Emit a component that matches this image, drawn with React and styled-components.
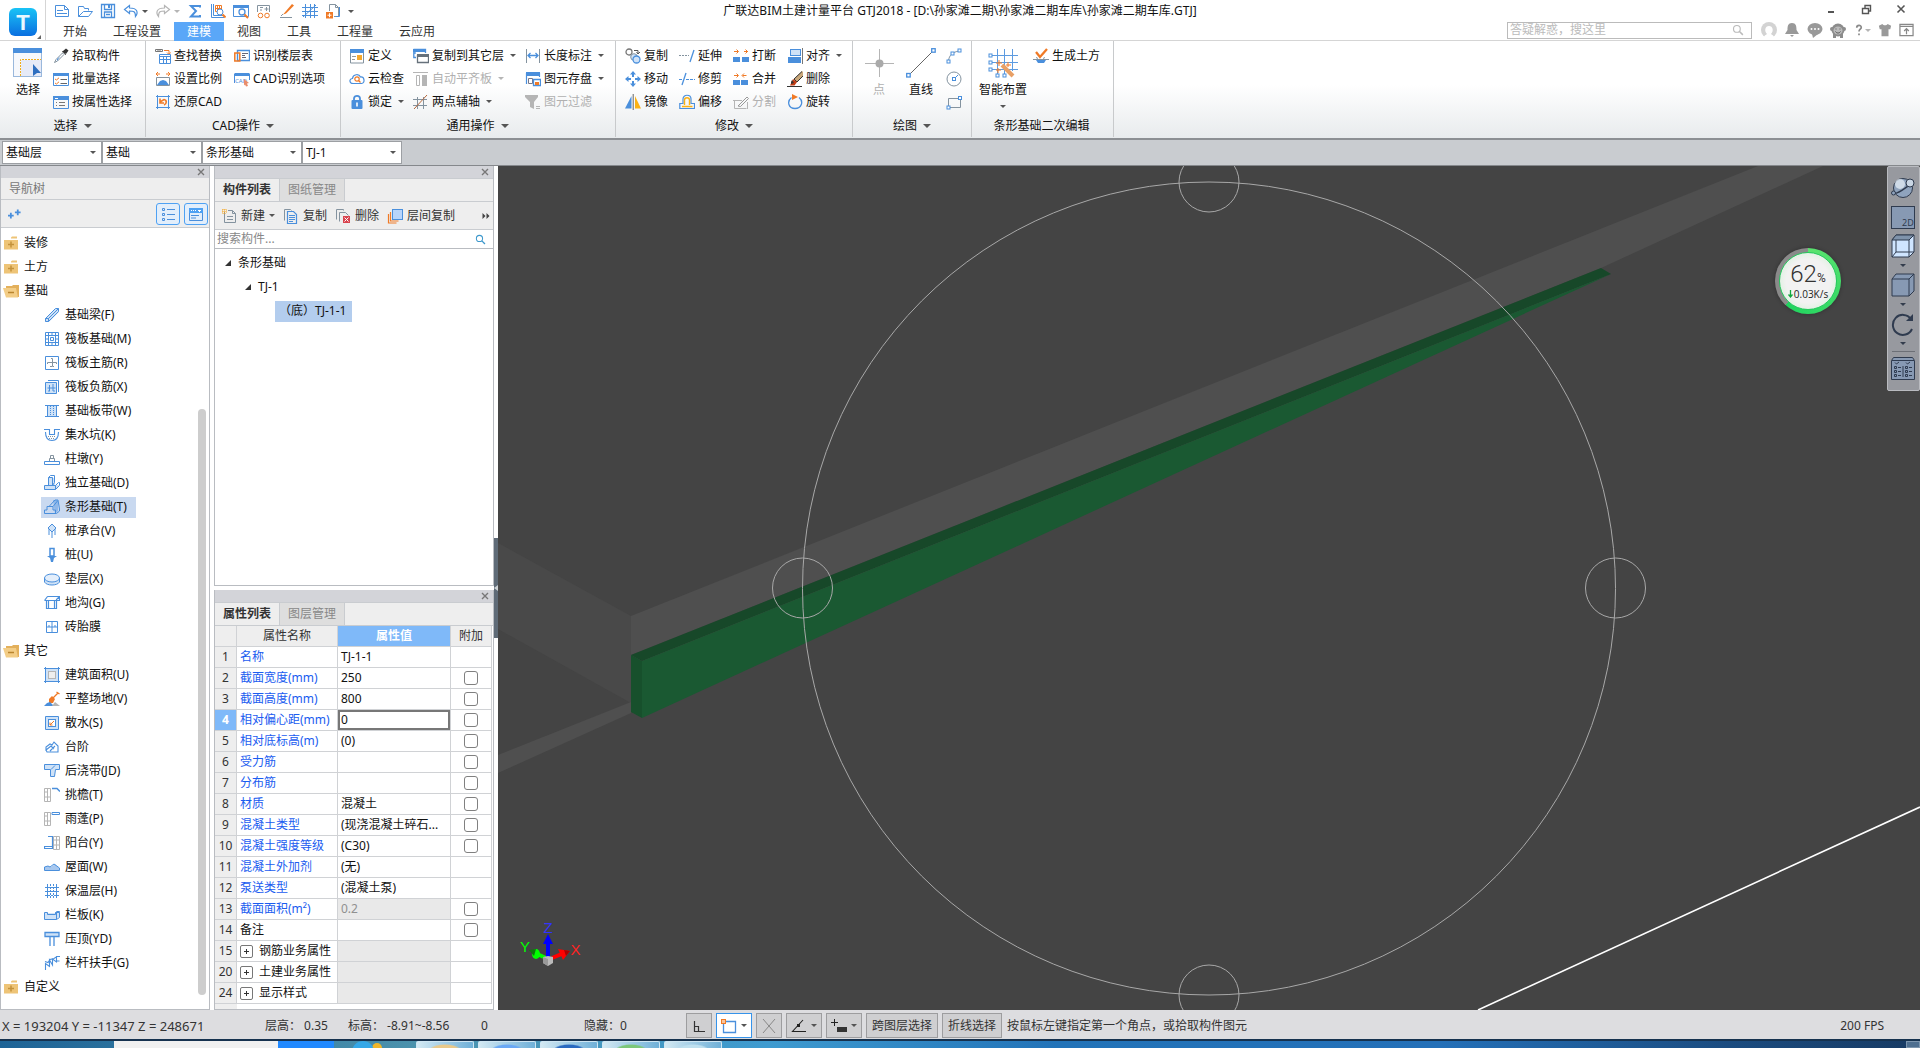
import React from 'react'
import styled, { createGlobalStyle, css } from 'styled-components'

const GlobalStyle = createGlobalStyle`
	* {
		box-sizing: border-box;
	}
	body {
		margin: 0;
		background: #fff;
		color: #111;
		font: 12px/16px 'Noto Sans', 'Noto Sans CJK SC', sans-serif;
	}
	button, input, select {
		margin: 0;
		padding: 0;
		border: 0;
		background: none;
		color: inherit;
		font: inherit;
	}
	ul {
		margin: 0;
		padding: 0;
		list-style: none;
	}
	svg {
		display: block;
		flex: none;
	}
`

const B = '#4a8fdc'
const L = '#cfe2f7'
const G = '#84939f'
const O = '#f07a26'
const D = '#b5b5b5'

/* ---------- icons, 16 x 16 unless a size is given ---------- */

const stroke = (color, d, width = 1) => <path d={d} stroke={color} strokeWidth={width} fill='none' />
const fill = (color, d) => <path d={d} fill={color} />

const shapes = {
	newFile: <>{stroke(B, 'M1.5 2.5h9l4 4v7h-13zM10.5 2.5v4h4M3 7.5h6M3 10.5h10')}</>,
	open: <>{stroke(B, 'M1.5 13.5v-10h5l1 2h4v2M1.5 13.5l5-5h9l-4 5z')}</>,
	save: <>{stroke(B, 'M1.5 1.5h13v13h-13zM4.5 1.5v5h7v-5M4.5 14v-5h7v5M6 11.5h4', 1.3)}{fill(B, 'M8 2h2v3H8z')}</>,
	undo: <>{stroke(B, 'M6.5 2.5l-5 4 5 4v-2.5c4 0 6 0 6 5.500 3-4 2-8.500-6-8.500z', 1.2)}</>,
	redo: <>{stroke(D, 'M9.500 2.500l5 4-5 4v-2.500c-4 0-6 0-6 5.500-3-4-2-8.500 6-8.500z', 1.2)}</>,
	sum: <>{stroke(B, 'M13 4.500V3H4l5 5-5 5.500h9V12', 2)}</>,
	quantity: <>{stroke(B, 'M1.500 1v13.500H14M3.500 1v11.500H14')}{stroke(O, 'M5.500 2.500h6v6h-6zM7.500 2.500v6M9.500 2.500v6M5.500 5.500h6')}<circle cx='10' cy='9' r='3' fill='#fff' stroke={B} />{stroke(O, 'M12.500 11.500l3 3', 2)}</>,
	preview: <>{stroke(B, 'M.5 2.500h15v11H.5z')}{fill(B, 'M0 2h16v3H0z')}<circle cx='9' cy='9' r='3' fill='#fff' stroke={B} strokeWidth='1.300' />{stroke(O, 'M11.500 11.500l3.500 3.500', 2)}</>,
	glasses: <>{stroke(G, 'M1.500 9V2.500h12V9M4 4.500h3M4 7h2M10.500 4v4M8.500 6h4')}<circle cx='4.500' cy='12.500' r='2.300' fill='none' stroke={O} /><circle cx='11' cy='12.500' r='2.300' fill='none' stroke={O} /></>,
	pen: <>{fill(O, 'M13 1l2 1.500-8 8-3 1z')}{stroke(G, 'M4 11L2 13M1 14.500h12')}</>,
	grid: <>{stroke(B, 'M0 4.500h16M0 8.500h16M0 12.500h16M3.500 1v14M8.500 1v14M12.500 1v14M1 14L14 2')}</>,
	docAdd: <>{stroke(G, 'M4.500 8V1.500h6l3 3v9H9M10.500 1.500v3h3')}{stroke(B, 'M11 13.500h3.500V4')}{fill(O, 'M1 9h7v6.500H1z')}{stroke('#fff', 'M2.500 12.200h4M4.500 10.200v4')}</>,
	pipette: <>{fill('#333', 'M10 3l3-2.500 2.500 2L13 6l-4-2z')}{stroke('#666', 'M9 3l4 4')}{stroke(G, 'M9.500 5L3 11.500l-1.500 3 3-1.500L11 6.500z')}{fill(B, 'M4 11l3-2.500L4 13z')}</>,
	batch: <>{stroke(B, 'M.5 2.500h15v12H.5z')}{fill(B, 'M0 2h16v3H0z')}{stroke(O, 'M2 8l1.500 1L6 6.800M2 12l1.500 1L6 10.800')}{stroke('#666', 'M7.500 8.500H14M7.500 12.500H14')}</>,
	byProp: <>{stroke(B, 'M.5 2.500h15v12H.5z')}{fill(B, 'M0 2h16v4H0z')}{stroke('#fff', 'M2 4.500h3')}{stroke('#777', 'M3 8.500h1M6 8.500h6M3 11.500h1M6 11.500h6')}</>,
	find: <>{stroke('#777', 'M.5 1.500h7v2h-7zM3 1.500v2M5 1.500v2')}{stroke(O, 'M9 2.500h5V6M12 4.500l2 2 1.500-2')}{stroke(B, 'M4.500 6.500h11v9h-11zM5 8.500h10M8.500 9v6M11.500 9v6M5 11.500h10')}</>,
	scale: <>{stroke(O, 'M1 3h4M11 3h4M3 1L1 3l2 2M13 1l2 2-2 2')}{stroke(G, 'M1.500 6.500h13v8h-13z')}{fill(B, 'M2 14l3-4 3-1 3 1 3 4z')}</>,
	restore: <>{stroke(B, 'M1 2.500h14M1 13.500h14M2.500 1v14M13.500 1v14')}{stroke(O, 'M9 11c3-1 3-5 0-5.500L5 8M5 4.500V9h4', 1.600)}</>,
	floorTable: <>{stroke(B, 'M3.500 2.500h12v10h-12z', 1.400)}{stroke(O, 'M.8 5v8h5V5z', 1.500)}{stroke('#667', 'M8 5.500h6M8 7.500h3M8 9.500h4')}</>,
	cadOption: <>{stroke(B, 'M.5 2.500h15M.5 3v9M15.500 3v6')}{fill(B, 'M1 2h14v3H1z')}<text x='1' y='11.500' fontSize='6' fill={B}>CAD</text>{fill('#e98d6b', 'M10 8l5 4-2 .5 1 2.500-2 .5-1-2-1 1z')}</>,
	define: <>{stroke(G, 'M1.500 3v12h13V3')}{fill(B, 'M1 1h14v4H1z')}{stroke('#999', 'M3 8.500h4M3 11.500h3')}{fill('#f5a82c', 'M8 7h5v5H8z')}</>,
	cloud: <>{stroke(B, 'M4 12.500C0 12.500 0 7.500 3.500 7.500 4 3 10 2.500 11.500 6c4-.5 5 6 1 6.500z', 1.200)}<circle cx='8' cy='8' r='2.200' fill='none' stroke={O} strokeWidth='1.200' />{stroke(O, 'M9.500 9.500l2 2', 1.300)}</>,
	lock: <>{stroke(B, 'M5 7V4.500C5 1 11 1 11 4.500V7', 1.800)}<rect x='2.500' y='6' width='11' height='9' rx='1' fill={B} />{stroke('#fff', 'M8 8.500v4', 1.600)}</>,
	copyLayer: <>{stroke(B, 'M.8 1v8.500H3M.8 5h2M12.500 5V1.500H.5', 1.300)}{fill(B, 'M0 1h13v3H0z')}{stroke('#66717b', 'M4.500 7.500h11v7h-11z', 1.300)}{fill('#66717b', 'M4 6h12v3H4z')}</>,
	alignSlab: <>{stroke(D, 'M0 1.500h15M3.500 4.500h3v10h-3z')}{fill(D, 'M9 4h5v11H9z')}</>,
	axis: <>{stroke(G, 'M0 5.500h14M0 11.500h14M4.500 3v12M10.500 3v12')}{stroke('#b5683c', 'M1 15L14 1', 1)}</>,
	length: <>{stroke(G, 'M1.500 1v14M14.500 1v14')}{stroke(B, 'M3 7.500h10M5.500 5L3 7.500 5.500 10M10.500 5l2.500 2.500L10.500 10', 1.300)}</>,
	store: <>{stroke(B, 'M1.500 13V2.500h13V6', 1.200)}{fill(B, 'M1 1h14v4H1z')}{stroke('#778', 'M3.500 7.500h4v5h-4z')}{stroke(B, 'M8.500 8.500h7v6h-7z', 1.300)}{fill(O, 'M10 11h4v3h-4z')}</>,
	filter: <>{fill(D, 'M0 1h13v2L9 8v7l-4-2V8L0 3z')}{stroke(D, 'M11 12.500h4M11 14.500h4')}</>,
	copy: <><circle cx='4' cy='4' r='3' fill='none' stroke='#777' strokeWidth='1.300' />{stroke('#555', 'M9 2.500h4V6M11.500 4l1.500 2 2-2')}<circle cx='9' cy='9' r='3.300' fill={L} stroke={G} /><circle cx='11.500' cy='11.500' r='3.500' fill={L} stroke={B} strokeWidth='1.300' /></>,
	move: <>{fill(B, 'M8 0l3 3.500H9V6H7V3.500H5zM8 16l3-3.500H9V10H7v2.500H5zM0 8l3.500-3v2H6v2H3.500v2zM16 8l-3.500-3v2H10v2h2.500v2z')}</>,
	mirror: <>{fill(B, 'M6.500 2v12.500H0z')}{fill('#fbb216', 'M10 2v12.500h6z')}{stroke('#666', 'M8.200 0v16')}</>,
	extend: <><path d='M0 7.500h10' stroke={G} strokeDasharray='2 1' />{stroke(B, 'M15 2l-4 12', 1.300)}</>,
	trim: <>{stroke(B, 'M7 2L3 14', 1.300)}<path d='M0 8.500h4M7 8.500h9' stroke={B} strokeDasharray='3 1' /></>,
	offset: <>{stroke(B, 'M.8 14.500V9.500H4V5c0-5 8-5 8 0v4.500h3.500v5z', 1.200)}{stroke('#fbb216', 'M3 12.500h10.500M5.500 11V6c0-3 5-3 5 0v5', 1.400)}</>,
	break: <>{fill(B, 'M0 9h7v5H0zM9 9h7v5H9z')}{stroke(O, 'M1 3.500h4M3.500 1.500l2 2-2 2M11 3.500h4M12.500 1.500l2 2-2 2')}</>,
	merge: <>{fill(B, 'M0 9h7v5H0zM8 9h7v5H8z')}{stroke(O, 'M1 4.500h4M3.500 2.500l2 2-2 2M9.500 4.500h4M11 2.500l-2 2 2 2')}</>,
	split: <>{stroke(D, 'M1.500 6v8.500h12M0 6.500h9M14.500 8v7')}{stroke('#999', 'M5 12l9-9 1.500 1.500-8 8z')}</>,
	align: <>{stroke('#777', 'M15.500 0v16')}<rect x='3.500' y='1.500' width='10' height='6' fill={L} stroke={B} />{fill(B, 'M1 9h13v6H1z')}</>,
	erase: <>{stroke('#333', 'M0 15.500h15')}{fill('#c9a77a', 'M15 0l1 1v4l-6 6-3-3z')}{stroke('#333', 'M15 .5L7 8l3 3 6-6')}{fill('#c23c14', 'M6 8l4 3-2.500 3.500H3z')}{fill('#333', 'M4 11l1-2 2 3-3 1z')}</>,
	rotate: <>{stroke(B, 'M4.500 3.500c-5 4-3 11 3.500 11s9-7 4-11', 1.300)}{fill(O, 'M5 0l6 3-6 3z')}</>,
	arc: <>{stroke(G, 'M2.500 13C3 7 7 4 13 3')}{[[1, 12], [5, 4], [12, 1]].map(([x, y]) => <rect key={x} x={x} y={y} width='3' height='3' fill='#fff' stroke={B} />)}</>,
	circle: <><circle cx='8' cy='8' r='7' fill='none' stroke={G} />{stroke(B, 'M8 8l4-4')}<rect x='6.500' y='6.500' width='3' height='3' fill='#fff' stroke={B} /></>,
	rect: <>{stroke(G, 'M2.500 4.500h12v9h-12z')}<rect x='1' y='12' width='3' height='3' fill='#fff' stroke={B} /><rect x='12.500' y='2.500' width='3' height='3' fill='#fff' stroke={B} /></>,
	earthwork: <>{stroke(O, 'M3 4l4 5 7-8', 2.300)}{stroke(G, 'M0 11.500h16M3 9.500l2 1M12 9.500l-2 1')}{fill(B, 'M3 12l2 3h6l2-3z')}</>,

	search: <><circle cx='6.500' cy='6.500' r='4.500' fill='none' stroke='currentColor' strokeWidth='1.500' />{stroke('currentColor', 'M10 10l4.500 4.500', 2)}</>,
	close: <>{stroke('currentColor', 'M4 4l8 8M12 4l-8 8', 1.800)}</>,
	minimize: <>{fill('#555', 'M5 10h6v2H5z')}</>,
	restoreWin: <>{stroke('#555', 'M4.500 7.500h6v5h-6zM7 7V4.500h5.500V10H11', 1.400)}</>,
	avatar: <><circle cx='8' cy='8' r='8' fill='#d3d3d3' />{fill('#fff', 'M3 16c0-3 2-3 3-4-3-3-2-8 2-8s5 5 2 8c1 1 3 1 3 4z')}</>,
	bell: <>{fill('#999', 'M8 1c4 0 4.500 3 4.500 7L15 12H1l2.500-4c0-4 .5-7 4.500-7zM6 13h4l-2 2z')}</>,
	chat: <><ellipse cx='8' cy='7' rx='7.500' ry='6' fill='#999' />{fill('#999', 'M5 12l1 4 5-4z')}{[4.500, 8, 11.500].map((x) => <circle key={x} cx={x} cy='7' r='1' fill='#fff' />)}</>,
	monkey: <><circle cx='8' cy='8' r='6.500' fill='#8c8c8c' /><circle cx='2' cy='7' r='2' fill='#8c8c8c' /><circle cx='14' cy='7' r='2' fill='#8c8c8c' /><ellipse cx='8' cy='8.500' rx='4.500' ry='4' fill='#bbb' />{stroke('#555', 'M5.500 9.500c1 2 4 2 5 0M6 6.500v1M10 6.500v1')}{fill('#8c8c8c', 'M3 12h3v4H3zM10 12h3v4h-3z')}</>,
	help: <>{stroke('#8a8a8a', 'M5 5c0-4 6-4 6-.5 0 2.500-3 2.500-3 5.500M8 12.500V15', 2.300)}</>,
	shirt: <>{fill('#999', 'M1 3l4-2c1 2 5 2 6 0l4 2-1 4h-2v8H4V7H2z')}</>,
	collapse: <>{stroke('#888', 'M1 1.500h14v12H1zM1 3.500h14M8 12V6M5.500 8.500L8 6l2.500 2.500', 1.300)}</>,

	plus2: <>{stroke(B, 'M3.500 7v7M0 10.500h7M12 3v7M8.500 6.500h7', 2.200)}</>,
	listView: <>{stroke(B, 'M2.500 2.500h2v2h-2zM2.500 7.500h2v2h-2zM2.500 12.500h2v2h-2zM7 3.500h8M7 8.500h8M7 13.500h8')}</>,
	cardView: <>{stroke(B, 'M1.500 2.500h13v12h-13z')}{fill('#4ea1f3', 'M1 2h14v5H1z')}{stroke('#fff', 'M3 4.500h1M5 4.500h1M7 4.500h1M10 4.500h3M11.500 4v2')}{stroke(B, 'M3 9.500h8M3 12h5')}</>,
	folder: <>{fill('#eec477', 'M1 5h14v9.500H1zM8 2.500l1-1h5v2H8z')}{stroke('#c4923c', 'M5 9.500h6M8 6.500v6', 1.500)}</>,
	folderOpen: <>{fill('#e3b05c', 'M3 3h6l1-1h6v12H3z')}{fill('#f3cd86', 'M0 5h13l2 9.500H3z')}{stroke('#b9852f', 'M5 9.500h6', 1.500)}</>,
	beam: <>{fill(L, 'M1 12l10-10h4v3L5 15H1z')}{stroke(B, 'M1.500 11.500l10-10h3v3l-10 10h-3zM1.500 11.500h3v3M4.500 11.500l10-10')}</>,
	raft: <>{stroke(B, 'M1.500 1.500h13v13h-13zM1 4.500h14M1 11.500h14M4.500 1v14M11.500 1v14M6.500 6.500h3v3h-3zM8 1v3M8 12v3M1 8h3M12 8h3')}</>,
	raftMain: <>{stroke(B, 'M1.500 1.500h13v13h-13z')}{stroke(G, 'M3.500 9V7.500h9V9M7 3.500h1.500v8H10M6 11.500h2')}</>,
	raftNeg: <>{fill(L, 'M1 4h11v11H1z')}{stroke(B, 'M1.500 3.500h11v11h-11zM4 1.500h10.500V13M3.500 9h8M5.500 6v6M9 5v7M4 12h2M9 12h2')}</>,
	slabBand: <>{fill(L, 'M3 3h10v10H3z')}{stroke(B, 'M1 2.500h14M1 13.500h14M3.500 3v10M12.500 3v10')}<path d='M6.500 3v10M9.500 3v10' stroke={B} strokeDasharray='1 1' /></>,
	sump: <>{stroke(B, 'M0 2.500h5.500v5h5v-5H16M1.500 5c0 6 3 8.500 6.500 8.500s6.500-2.500 6.500-8.500', 1.100)}<path d='M4 9.500h8M5 11.500h6' stroke={G} strokeDasharray='1 1' /></>,
	pier: <>{stroke(G, 'M5.500 10V7.500h5V10M6.500 7.500v-3h3v3')}{stroke(B, 'M.5 10.500h15v3H.5z')}</>,
	isolated: <>{fill(L, 'M5 3h6v7h4l-2 4H1v-3h4z')}{stroke(B, 'M4.500 10.500v-8l2-2h4v7l-2 3M4.500 2.500h4v8M.5 10.500h11v4H.5zM11.500 10.500l3-3h1v3l-4 4')}</>,
	strip: <>{fill('#8fb8ea', 'M9 1h5v11l-3 3z')}{stroke(B, 'M.5 14.500V11H3V7.500h2L11 1h3l1.500 9v2l-3 2.500zM5 7.500h4V11h2.500v3.500M9 7.500L13.500 2')}</>,
	pileCap: <>{fill(L, 'M8 1l4 4-4 4-4-4z')}{stroke(B, 'M8 1l4 4-4 4-4-4zM8 9v6M5 6v6M11 6v6')}</>,
	pile: <>{fill(B, 'M3 9h10l-3 2-1 4H7l-1-4z')}{stroke(B, 'M6 1.500h4V9H6z', 1.500)}</>,
	cushion: <>{fill(L, 'M1 7h14v4c-2 4-12 4-14 0z')}<ellipse cx='8' cy='7' rx='7.500' ry='4' fill='#e3eefb' stroke={B} />{stroke(B, 'M.5 7v4c2 4 13 4 15 0V7')}</>,
	trench: <>{stroke(B, 'M3.500 1.500h12v4h-3M.5 5.500h12v-1L15 2M.5 5.500l3-4M2.500 6v7.500h2V6M10.500 6v7.500h2V6M4.500 13.500h6', 1.200)}</>,
	brick: <>{stroke(B, 'M2.500 2.500h11v11h-11zM8 2v11M3 8h10M5 6v2M11 6v2')}</>,
	area: <>{fill(L, 'M2 2h12v12H2z')}{stroke(B, 'M1.500 0v16M14.500 0v16M0 1.500h16M0 14.500h16')}<rect x='4.500' y='4.500' width='7' height='7' fill='#eee' stroke={D} /></>,
	level: <>{fill(O, 'M5 8l3-3 3 3-2 4H5z')}{stroke(O, 'M9 7l5-5M12.500 1l3 2', 1.300)}{fill(B, 'M0 15l3-3 3-1 4 4z')}{fill(D, 'M8 15l3-4 5 4z')}</>,
	apron: <>{fill(L, 'M2 2h12v12H2z')}{stroke(B, 'M1.500 1.500h13v13h-13z')}<rect x='4.500' y='4.500' width='7' height='7' fill='#fff' stroke={B} />{stroke(O, 'M10 6l-4 4M6 7.500V10h2.500')}</>,
	steps: <>{stroke(B, 'M2 12V8l4-3 2 1 2-3 4 4v6H3l-1-2 5-4 3 3M6 12l5-5', 1.100)}</>,
	lateBand: <>{fill(L, 'M1 2h14v4h-4v8H7V6H1z')}{stroke(B, 'M.5 1.500h15v5h-4l-1 7h-4v-7h-6zM7 6.500l4-4')}</>,
	eaves: <>{stroke(D, 'M.5 1.500h6v13h-6zM3.500 1v4M3.500 5h-3M3.500 5v5h3M3.500 10v4M.5 10h3')}{stroke(B, 'M8 1.500h5l3 3', 1.500)}</>,
	canopy: <>{stroke(D, 'M.5 1.500h6v13h-6zM3.500 1v4M3.500 5h-3M3.500 5v5h3M3.500 10v4M.5 10h3')}{stroke(B, 'M8 1.500h7.500v2H8z')}</>,
	balcony: <>{stroke(D, 'M9.500 1.500h6v13h-6zM12.500 1v13M9.500 5h6M9.500 10h6')}{stroke(B, 'M4 1.500h4.500v12H.5v-2h8', 1.200)}</>,
	roof: <>{fill('#a7c7ee', 'M1 11V8l3-1 3 1 4-3 4 4v2z')}{stroke(B, 'M.5 11.500V8L4 7l2 1 4-3 5.500 4v2.500z')}</>,
	insulation: <>{stroke(B, 'M3.500 1v14M12.500 1v14')}<path d='M1 4.500h14M1 8.500h14M1 12.500h14M6.500 1v14M9.500 1v14' stroke={B} strokeDasharray='2 1' /></>,
	parapet: <>{fill(L, 'M1 6h11l3-2v6l-3 2H1z')}{stroke(B, 'M.5 5.500h3v2h8v-2h4v5l-3 2H.5zM12.500 5.500v7M11.500 5.500l1.500-1h2.500v1')}</>,
	coping: <>{fill(L, 'M1 2h14v4H1z')}{stroke(B, 'M1 1.500h14v4H1zM6 6v9M10 6v9', 1.300)}</>,
	handrail: <>{stroke(B, 'M1.500 15V8.500l4 3V5l3 5V4l4 3V1M1 6.500l3 1 2-3 4-1 3-2h3M12.500 6h3', 1.100)}</>,

	newPart: <>{stroke(G, 'M3.500 4v10.500h11v-9l-3-3H7M11.500 2.500v3h3M6 8.500h6M6 11.500h6')}<path d='M1 2h5M1 4h5M2 1v5M4 1v5' stroke='#f5a623' strokeDasharray='1 1' /></>,
	copyPart: <>{stroke(G, 'M1.500 12.500v-11h6l1 1')}{stroke(B, 'M4.500 3.500h6l3 3v9h-9zM6 7.500h6M6 9.500h6M6 11.500h6M6 13.500h4', 1.200)}</>,
	deletePart: <>{stroke(G, 'M1.500 11.500v-10h7v1M4.500 13.500v-9h6l3 3')}{fill('#d9434e', 'M8 8h7v7H8z')}{stroke('#fff', 'M9.500 9.500l4 4M13.500 9.500l-4 4')}</>,
	layerCopy: <>{stroke(O, 'M1.500 6v9h8M3.500 4v9h8', 1.200)}<rect x='5.500' y='1.500' width='10' height='10' fill='#b7d4fb' stroke={B} /></>,
	more: <>{fill('#444', 'M1 2l6 6-6 6zM9 2l6 6-6 6z')}</>,

	ortho: <>{stroke('#333', 'M3.500 3v10.500H14M3.500 8.500h4v5', 1.200)}</>,
	snapRect: <>{stroke(B, 'M2.500 3.500h12v11h-12z', 1.300)}<rect x='.5' y='1.500' width='4' height='4' fill='#f9c49b' stroke={O} /></>,
	cross: <>{stroke('#888', 'M2 1l12 14M14 1L2 15')}</>,
	angle: <>{stroke('#222', 'M12 2L1.500 13.500H15', 1.100)}{fill('#222', 'M6 6h3v3H6z')}</>,
	pointInput: <>{stroke('#222', 'M3.500 1v7M0 4.500h7')}{fill('#333', 'M6 9h10v5H6z')}</>,
}

const Icon = ({ name, size = 16 }) => (
	<svg width={size} height={size} viewBox='0 0 16 16' aria-hidden='true'>
		{shapes[name]}
	</svg>
)

const Caret = styled.i`
	flex: none;
	width: 0;
	border: 3px solid transparent;
	border-top-color: ${({ $faded }) => ($faded ? '#b5b5b5' : '#555')};
	border-bottom: 0;
`

/* ---------- title bar ---------- */

const Header = styled.header`
	display: grid;
	grid-template-columns: 46px 1fr auto 1fr 46px;
	grid-template-rows: 22px 18px;
	border-bottom: 1px solid #d5d5d5;
	height: 41px;
`
const LogoBox = styled.button`
	grid-row: 1 / 3;
	display: flex;
	padding: 8px 0 0 9px;
	border-right: 1px solid #d5d5d5;
`
const QuickBar = styled.div`
	display: flex;
	align-items: center;
	gap: 7px;
	padding-left: 8px;
`
const QuickButton = styled.button`
	display: flex;
	align-items: center;
	gap: 3px;
`
const Title = styled.h1`
	margin: 0;
	font-size: 12px;
	line-height: 22px;
	font-weight: 400;
	white-space: nowrap;
`
const WindowButtons = styled.div`
	grid-column: 4 / 6;
	display: flex;
	justify-content: flex-end;
	padding-right: 2px;

	& button {
		display: flex;
		align-items: center;
		justify-content: center;
		width: 35px;
		height: 18px;
		color: #555;
	}
`
const TabRow = styled.div`
	grid-column: 2 / 6;
	display: flex;
	justify-content: space-between;
	min-width: 0;
	padding-left: 4px;
`
const Tabs = styled.nav`
	display: flex;
`
const Tab = styled.button`
	height: 19px;
	padding: 0 13px;
	color: ${({ $active }) => ($active ? '#fff' : '#333')};
	background: ${({ $active }) => ($active ? '#5aa7f8' : 'none')};
`
const Tools = styled.div`
	display: flex;
	align-items: center;
	gap: 7px;
	padding: 0 6px 2px 0;

	& button {
		display: flex;
		align-items: center;
	}
`
const SearchBox = styled.label`
	display: flex;
	align-items: center;
	width: 245px;
	height: 17px;
	margin-right: 2px;
	padding: 0 7px 0 2px;
	border: 1px solid #bbb;
	color: #bbb;

	& input {
		flex: 1;
		min-width: 0;
		height: 15px;
		outline: none;
	}
	& input::placeholder {
		color: #bbb;
	}
`

const Logo = () => (
	<svg width='32' height='32' viewBox='0 0 32 32' aria-hidden='true'>
		<defs>
			<linearGradient id='logo' x1='0' y1='0' x2='0' y2='1'>
				<stop offset='0' stopColor='#19c3f6' />
				<stop offset='1' stopColor='#0a6fe0' />
			</linearGradient>
		</defs>
		<rect width='28' height='28' rx='6' fill='url(#logo)' />
		<text x='14' y='22' textAnchor='middle' fontSize='22' fontWeight='700' fontFamily='Liberation Sans, sans-serif' fill='#e9f8ff'>T</text>
		<path d='M32 27v4h-4z' fill='#666' />
	</svg>
)

const quick = ['newFile', 'open', 'save', 'undo', 'redo', 'sum', 'quantity', 'preview', 'glasses', 'pen', 'grid', 'docAdd']
const tabs = ['开始', '工程设置', '建模', '视图', '工具', '工程量', '云应用']

const TitleBar = () => (
	<Header>
		<LogoBox aria-label='T'><Logo /></LogoBox>
		<QuickBar>
			{quick.map((name) => (
				<QuickButton key={name} aria-label={name}>
					<Icon name={name} />
					{(name === 'undo' || name === 'redo') && <Caret $faded={name === 'redo'} />}
				</QuickButton>
			))}
			<Caret />
		</QuickBar>
		<Title>广联达BIM土建计量平台 GTJ2018 - [D:\孙家滩二期\孙家滩二期车库\孙家滩二期车库.GTJ]</Title>
		<WindowButtons>
			<button aria-label='minimize'><Icon name='minimize' /></button>
			<button aria-label='restore'><Icon name='restoreWin' /></button>
			<button aria-label='close'><Icon name='close' size={14} /></button>
		</WindowButtons>
		<TabRow>
			<Tabs>
				{tabs.map((t) => <Tab key={t} $active={t === '建模'}>{t}</Tab>)}
			</Tabs>
			<Tools>
				<SearchBox>
					<input aria-label='搜索' placeholder='答疑解惑，搜这里' />
					<Icon name='search' size={12} />
				</SearchBox>
				<button aria-label='account'><Icon name='avatar' /></button>
				<button aria-label='notice'><Icon name='bell' /></button>
				<button aria-label='chat'><Icon name='chat' /></button>
				<button aria-label='service'><Icon name='monkey' /></button>
				<button aria-label='help'><Icon name='help' size={12} /><Caret $faded /></button>
				<button aria-label='skin'><Icon name='shirt' size={14} /></button>
				<button aria-label='collapse'><Icon name='collapse' size={15} /></button>
			</Tools>
		</TabRow>
	</Header>
)

/* ---------- ribbon ---------- */

const RibbonBar = styled.section`
	display: flex;
	height: 99px;
	padding-bottom: 1px;
	background: linear-gradient(#fff 45%, #e8ebed);
	border-bottom: 2px solid #8c8f93;
`
const Group = styled.div`
	display: flex;
	flex-direction: column;
	min-width: ${({ $width }) => $width}px;
	padding: 3px 0 0 ${({ $indent }) => $indent || 9}px;
	border-right: 1px solid #c8cacc;
`
const GroupBody = styled.div`
	display: flex;
	gap: ${({ $gap }) => $gap || 11}px;
	height: 71px;
`
const GroupLabel = styled.button`
	display: flex;
	flex: 1;
	align-items: center;
	justify-content: center;
	gap: 6px;
	padding-right: 9px;

	& ${Caret} {
		border-width: 4px 4px 0;
	}
`
const Column = styled.div`
	display: flex;
	flex-direction: column;
`
const Item = styled.button`
	display: flex;
	align-items: center;
	height: 23px;
	gap: 3px;
	white-space: nowrap;
	color: ${({ $faded }) => ($faded ? '#b0b0b0' : '#111')};

	& ${Caret} {
		margin-left: 3px;
	}
`
const BigItem = styled.button`
	display: flex;
	flex-direction: column;
	align-items: center;
	gap: 4px;
	min-width: ${({ $width }) => $width || 34}px;
	padding-top: 4px;
	color: ${({ $faded }) => ($faded ? '#b0b0b0' : '#111')};

	& ${Caret} {
		margin-top: 3px;
	}
`

const SelectArt = () => (
	<svg width='30' height='30' viewBox='0 0 30 30' aria-hidden='true'>
		<rect x='.5' y='.5' width='28' height='28' fill='#f6f8fc' stroke='#9ab8dc' />
		<rect width='29' height='5' fill={B} />
		<path d='M8 12h20v16H8z' fill='#e6eaf7' />
		<path d='M7.500 28V11.500H28' fill='none' stroke='#f0ad1c' strokeDasharray='2 1' />
		<path d='M20 16l8 9h-4l-4 3z' fill='#2f6fc0' />
	</svg>
)
const PointArt = () => (
	<svg width='30' height='30' viewBox='0 0 30 30' aria-hidden='true'>
		<path d='M15.500 1v28M1 15.500h29' stroke={D} />
		<circle cx='15.500' cy='15.500' r='4' fill='#aaa' />
	</svg>
)
const LineArt = () => (
	<svg width='30' height='30' viewBox='0 0 30 30' aria-hidden='true'>
		<path d='M2 28L28 2' stroke='#666' />
		<rect x='.7' y='25.500' width='3.500' height='3.500' fill='#fff' stroke={B} strokeWidth='1.300' />
		<rect x='25.700' y='.7' width='3.500' height='3.500' fill='#fff' stroke={B} strokeWidth='1.300' />
	</svg>
)
const SmartArt = () => (
	<svg width='30' height='30' viewBox='0 0 30 30' aria-hidden='true'>
		<path d='M3 7.500h27M3 14.500h27M3 21.500h27M9.500 1v26M16.500 1v26M24.500 1v22' stroke='#5d9be0' fill='none' />
		{[[1, 6], [1, 13], [1, 20], [8, 26], [15, 26]].map(([x, y]) => (
			<rect key={`${x}-${y}`} x={x} y={y} width='3' height='3' fill='#fff' stroke={B} />
		))}
		<path d='M14 17l11 11' stroke='#e8a066' strokeWidth='4' />
		<path d='M11 12v6M8 15h6M20 14v5M18 17h5M10 20v5M8 22h5' stroke={O} />
	</svg>
)

// [icon, label, options]
const Items = ({ list }) => (
	<Column>
		{list.map(([icon, label, opt = '']) => (
			<Item key={label} $faded={opt.includes('faded')}>
				<Icon name={icon} />
				{label}
				{opt.includes('menu') && <Caret $faded={opt.includes('faded')} />}
			</Item>
		))}
	</Column>
)

const Ribbon = () => (
	<RibbonBar>
		<Group $width={146}>
			<GroupBody $gap={6}>
				<BigItem $width={38}><SelectArt />选择</BigItem>
				<Items list={[['pipette', '拾取构件'], ['batch', '批量选择'], ['byProp', '按属性选择']]} />
			</GroupBody>
			<GroupLabel>选择<Caret /></GroupLabel>
		</Group>
		<Group $width={195}>
			<GroupBody $gap={12}>
				<Items list={[['find', '查找替换'], ['scale', '设置比例'], ['restore', '还原CAD']]} />
				<Items list={[['floorTable', '识别楼层表'], ['cadOption', 'CAD识别选项']]} />
			</GroupBody>
			<GroupLabel>CAD操作<Caret /></GroupLabel>
		</Group>
		<Group $width={275} $indent={8}>
			<GroupBody $gap={9}>
				<Items list={[['define', '定义'], ['cloud', '云检查'], ['lock', '锁定', 'menu']]} />
				<Items list={[['copyLayer', '复制到其它层', 'menu'], ['alignSlab', '自动平齐板', 'menu faded'], ['axis', '两点辅轴', 'menu']]} />
				<Items list={[['length', '长度标注', 'menu'], ['store', '图元存盘', 'menu'], ['filter', '图元过滤', 'faded']]} />
			</GroupBody>
			<GroupLabel>通用操作<Caret /></GroupLabel>
		</Group>
		<Group $width={237}>
			<GroupBody>
				<Items list={[['copy', '复制'], ['move', '移动'], ['mirror', '镜像']]} />
				<Items list={[['extend', '延伸'], ['trim', '修剪'], ['offset', '偏移']]} />
				<Items list={[['break', '打断'], ['merge', '合并'], ['split', '分割', 'faded']]} />
				<Items list={[['align', '对齐', 'menu'], ['erase', '删除'], ['rotate', '旋转']]} />
			</GroupBody>
			<GroupLabel>修改<Caret /></GroupLabel>
		</Group>
		<Group $width={119}>
			<GroupBody $gap={8}>
				<BigItem $faded><PointArt />点</BigItem>
				<BigItem><LineArt />直线</BigItem>
				<Column>
					{['arc', 'circle', 'rect'].map((n) => <Item key={n} aria-label={n}><Icon name={n} /></Item>)}
				</Column>
			</GroupBody>
			<GroupLabel>绘图<Caret /></GroupLabel>
		</Group>
		<Group $width={142} $indent={7}>
			<GroupBody $gap={6}>
				<BigItem><SmartArt />智能布置<Caret /></BigItem>
				<Items list={[['earthwork', '生成土方']]} />
			</GroupBody>
			<GroupLabel>条形基础二次编辑</GroupLabel>
		</Group>
	</RibbonBar>
)

/* ---------- level / component pickers ---------- */

const PickerBar = styled.div`
	display: flex;
	height: 26px;
	padding: 1px 2px;
	background: #c9ccd0;
	border-bottom: 1px solid #85888c;
`
const Picker = styled.label`
	position: relative;
	width: 100px;

	& select {
		appearance: none;
		width: 100%;
		height: 23px;
		padding: 0 16px 0 3px;
		border: 1px solid #9c9fa3;
		border-radius: 0;
		background: #fff;
		font-size: 12px;
	}
	& ${Caret} {
		position: absolute;
		right: 6px;
		top: 10px;
	}
`

const pickers = [['楼层', '基础层'], ['类别', '基础'], ['类型', '条形基础'], ['构件', 'TJ-1']]

/* ---------- docked panels ---------- */

const Main = styled.main`
	display: flex;
	flex: 1;
	min-height: 0;
`
const Panel = styled.section`
	display: flex;
	flex-direction: column;
	flex: 1;
	min-height: 0;
	border: 1px solid #b9bcc1;
	border-top: 0;
	background: #fff;
`
const DockStrip = styled.div`
	display: flex;
	justify-content: flex-end;
	align-items: center;
	height: 12px;
	padding-right: 2px;
	background: #d3d4d9;
	color: #777;

	& button {
		display: flex;
	}
`
const Dock = () => (
	<DockStrip><button aria-label='关闭'><Icon name='close' size={12} /></button></DockStrip>
)
const NavColumn = styled.aside`
	display: flex;
	width: 210px;
	flex: none;
`
const NavTitle = styled.h2`
	margin: 0;
	height: 22px;
	padding-left: 8px;
	background: #eee;
	border-bottom: 1px solid #c9ccd0;
	color: #777;
	font-size: 12px;
	font-weight: 400;
	line-height: 22px;
`
const NavTools = styled.div`
	display: flex;
	align-items: center;
	gap: 4px;
	height: 28px;
	padding: 0 1px 0 7px;
	background: #eee;
	border-bottom: 1px solid #c9ccd0;

	& > button:first-child {
		margin-right: auto;
	}
`
const ViewButton = styled.button`
	display: flex;
	align-items: center;
	justify-content: center;
	width: 24px;
	height: 22px;
	border: 1px solid #4ea1f3;
	border-radius: 3px;
	background: #e2eefb;
`
const TreeArea = styled.div`
	display: flex;
	flex: 1;
	min-height: 0;
	overflow: hidden;
`
const Tree = styled.ul`
	flex: 1;
	padding-top: 3px;
`
const Node = styled.li`
	display: flex;
	align-items: center;
	height: 24px;
	padding-left: ${({ $child }) => ($child ? 40 : 2)}px;

	& button {
		display: flex;
		align-items: center;
		gap: 5px;
		height: 21px;
		padding: ${({ $child }) => ($child ? '0 9px 0 3px' : 0)};
		background: ${({ $selected }) => ($selected ? '#c9d9f0' : 'none')};
		white-space: nowrap;
	}
`
const ScrollTrack = styled.div`
	display: flex;
	width: 11px;
	padding: 181px 3px 14px 0;
`
const ScrollThumb = styled.div`
	flex: 1;
	border-radius: 4px;
	background: #cdcdcd;
`

const tree = [
	['folder', '装修'],
	['folder', '土方'],
	['folderOpen', '基础', [
		['beam', '基础梁(F)'], ['raft', '筏板基础(M)'], ['raftMain', '筏板主筋(R)'], ['raftNeg', '筏板负筋(X)'],
		['slabBand', '基础板带(W)'], ['sump', '集水坑(K)'], ['pier', '柱墩(Y)'], ['isolated', '独立基础(D)'],
		['strip', '条形基础(T)'], ['pileCap', '桩承台(V)'], ['pile', '桩(U)'], ['cushion', '垫层(X)'],
		['trench', '地沟(G)'], ['brick', '砖胎膜'],
	]],
	['folderOpen', '其它', [
		['area', '建筑面积(U)'], ['level', '平整场地(V)'], ['apron', '散水(S)'], ['steps', '台阶'],
		['lateBand', '后浇带(JD)'], ['eaves', '挑檐(T)'], ['canopy', '雨蓬(P)'], ['balcony', '阳台(Y)'],
		['roof', '屋面(W)'], ['insulation', '保温层(H)'], ['parapet', '栏板(K)'], ['coping', '压顶(YD)'],
		['handrail', '栏杆扶手(G)'],
	]],
	['folder', '自定义'],
]

const NavPanel = () => (
	<NavColumn>
		<Panel>
			<Dock />
			<NavTitle>导航树</NavTitle>
			<NavTools>
				<button aria-label='展开'><Icon name='plus2' size={13} /></button>
				<ViewButton aria-label='列表'><Icon name='listView' /></ViewButton>
				<ViewButton aria-label='卡片'><Icon name='cardView' /></ViewButton>
			</NavTools>
			<TreeArea>
				<Tree>
					{tree.map(([icon, label, children = []]) => (
						<React.Fragment key={label}>
							<Node><button><Icon name={icon} />{label}</button></Node>
							{children.map(([childIcon, child]) => (
								<Node key={child} $child $selected={childIcon === 'strip'}>
									<button><Icon name={childIcon} />{child}</button>
								</Node>
							))}
						</React.Fragment>
					))}
				</Tree>
				<ScrollTrack><ScrollThumb /></ScrollTrack>
			</TreeArea>
		</Panel>
	</NavColumn>
)

const MiddleColumn = styled.div`
	display: flex;
	flex-direction: column;
	flex: none;
	gap: 4px;
	width: 280px;
	margin-left: 4px;
`
const PanelTabs = styled.div`
	display: flex;
	height: 24px;
	background: #eee;
	border-bottom: 1px solid #c9ccd0;
	border-top: 1px solid #c9ccd0;
`
const PanelTab = styled.button`
	width: 65px;
	border-right: 1px solid #c9ccd0;
	${({ $active }) =>
		$active
			? css`
					font-weight: 700;
					color: #333;
			  `
			: css`
					background: #dedede;
					color: #888;
			  `}
`
const PartTools = styled.div`
	display: flex;
	align-items: center;
	gap: 8px;
	height: 28px;
	padding: 0 3px 0 6px;
	background: #eee;
	border-bottom: 1px solid #c9ccd0;
	color: #333;

	& button {
		display: flex;
		align-items: center;
		gap: 4px;
		white-space: nowrap;
	}
	& button:last-child {
		margin-left: auto;
	}
`
const PartSearch = styled.label`
	display: flex;
	align-items: center;
	height: 19px;
	padding: 0 7px 0 2px;
	border-bottom: 1px solid #b9bcc1;
	color: #3d98cc;

	& input {
		flex: 1;
		min-width: 0;
		outline: none;
	}
	& input::placeholder {
		color: #888;
	}
`
const PartTree = styled.ul`
	padding-top: 2px;
`
const Part = styled.li`
	display: flex;
	align-items: center;
	gap: 7px;
	height: 24px;
	padding-left: ${({ $level }) => $level * 20 - 10}px;

	& button {
		height: 21px;
		padding: ${({ $selected }) => ($selected ? '0 6px 0 4px' : 0)};
		margin-left: ${({ $selected }) => ($selected ? 10 : 0)}px;
		background: ${({ $selected }) => ($selected ? '#b3cdee' : 'none')};
	}
`
const Triangle = () => (
	<svg width='6' height='6' viewBox='0 0 6 6' aria-hidden='true'>
		<path d='M6 0v6H0z' fill='#333' />
	</svg>
)

const PartsPanel = () => (
	<Panel>
		<Dock />
		<PanelTabs>
			<PanelTab $active>构件列表</PanelTab>
			<PanelTab>图纸管理</PanelTab>
		</PanelTabs>
		<PartTools>
			<button><Icon name='newPart' />新建<Caret /></button>
			<button><Icon name='copyPart' />复制</button>
			<button><Icon name='deletePart' />删除</button>
			<button><Icon name='layerCopy' />层间复制</button>
			<button aria-label='更多'><Icon name='more' size={8} /></button>
		</PartTools>
		<PartSearch>
			<input aria-label='搜索构件' placeholder='搜索构件...' />
			<Icon name='search' size={11} />
		</PartSearch>
		<PartTree>
			<Part $level={1}><Triangle /><button>条形基础</button></Part>
			<Part $level={2}><Triangle /><button>TJ-1</button></Part>
			<Part $level={3} $selected><button>（底）TJ-1-1</button></Part>
		</PartTree>
	</Panel>
)

const Table = styled.table`
	width: 277px;
	table-layout: fixed;
	border-collapse: separate;
	border-spacing: 0;

	& th, & td {
		height: 21px;
		padding: 0 0 0 3px;
		border-right: 1px solid #d0d2d5;
		border-bottom: 1px solid #d0d2d5;
		line-height: 20px;
		text-align: left;
		font-weight: 400;
		white-space: nowrap;
		overflow: hidden;
	}
	& thead th {
		padding: 0;
		background: #eee;
		color: #333;
		text-align: center;
	}
	& thead th:nth-child(3) {
		background: #7fb9f9;
		color: #fff;
		font-weight: 700;
	}
`
const RowNumber = styled.th`
	&& {
		padding: 0;
		background: ${({ $active }) => ($active ? '#7fb9f9' : '#eee')};
		color: ${({ $active }) => ($active ? '#fff' : '#333')};
		font-weight: ${({ $active }) => ($active ? 700 : 400)};
		text-align: center;
	}
`
const NameCell = styled.td`
	color: ${({ $plain }) => ($plain ? '#111' : '#1a5cf0')};

	& button {
		display: flex;
		align-items: center;
		gap: 6px;
	}
`
const ValueCell = styled.td`
	background: ${({ $locked }) => ($locked ? '#e9e9e9' : '#fff')};
	color: ${({ $locked }) => ($locked ? '#909090' : '#111')};

	&& {
		padding-left: ${({ $editing }) => ($editing ? 0 : 3)}px;
	}
	& input {
		display: block;
		width: 100%;
		height: 20px;
		padding-left: 1px;
		border: 2px solid #777;
		outline: none;
	}
`
const CheckCell = styled.td`
	&& {
		padding: 0 0 0 13px;
	}
	& input {
		display: block;
		appearance: none;
		width: 14px;
		height: 14px;
		border: 1px solid #808080;
		border-radius: 3px;
		background: #fff;
	}
`
const Expander = styled.span`
	display: flex;
	align-items: center;
	justify-content: center;
	width: 13px;
	height: 13px;
	border: 1px solid #777;
	border-radius: 2px;
`
const TableFoot = styled.div`
	flex: 1;
	width: 22px;
	background: #eee;
`

const props = [
	{ n: 1, name: '名称', value: 'TJ-1-1' },
	{ n: 2, name: '截面宽度(mm)', value: '250', check: true },
	{ n: 3, name: '截面高度(mm)', value: '800', check: true },
	{ n: 4, name: '相对偏心距(mm)', value: '0', check: true, editing: true },
	{ n: 5, name: '相对底标高(m)', value: '(0)', check: true },
	{ n: 6, name: '受力筋', value: '', check: true },
	{ n: 7, name: '分布筋', value: '', check: true },
	{ n: 8, name: '材质', value: '混凝土', check: true },
	{ n: 9, name: '混凝土类型', value: '(现浇混凝土碎石...', check: true },
	{ n: 10, name: '混凝土强度等级', value: '(C30)', check: true },
	{ n: 11, name: '混凝土外加剂', value: '(无)' },
	{ n: 12, name: '泵送类型', value: '(混凝土泵)' },
	{ n: 13, name: '截面面积(m²)', value: '0.2', check: true, locked: true },
	{ n: 14, name: '备注', value: '', check: true, plain: true },
	{ n: 15, name: '钢筋业务属性', value: '', group: true },
	{ n: 20, name: '土建业务属性', value: '', group: true },
	{ n: 24, name: '显示样式', value: '', group: true },
]

const PropsPanel = () => (
	<Panel>
		<Dock />
		<PanelTabs>
			<PanelTab $active>属性列表</PanelTab>
			<PanelTab>图层管理</PanelTab>
		</PanelTabs>
		<Table>
			<colgroup>
				<col width='22' />
				<col width='101' />
				<col width='113' />
				<col width='41' />
			</colgroup>
			<thead>
				<tr><th /><th>属性名称</th><th>属性值</th><th>附加</th></tr>
			</thead>
			<tbody>
				{props.map((p) => (
					<tr key={p.n}>
						<RowNumber scope='row' $active={p.editing}>{p.n}</RowNumber>
						<NameCell $plain={p.plain || p.group}>
							{p.group ? (
								<button>
									<Expander>
										<svg width='7' height='7' viewBox='0 0 7 7' aria-hidden='true'><path d='M3.500 1v5M1 3.500h5' stroke='#333' /></svg>
									</Expander>
									{p.name}
								</button>
							) : p.name}
						</NameCell>
						<ValueCell $locked={p.locked || p.group} $editing={p.editing}>
							{p.editing ? <input aria-label={p.name} defaultValue={p.value} /> : p.value}
						</ValueCell>
						<CheckCell>{p.check && <input type='checkbox' aria-label={`附加 ${p.name}`} />}</CheckCell>
					</tr>
				))}
			</tbody>
		</Table>
		<TableFoot />
	</Panel>
)

/* ---------- 3D view ---------- */

const Splitter = styled.div`
	display: flex;
	align-items: center;
	width: 4px;
	flex: none;
	background: #fff;

	& button {
		display: flex;
		align-items: center;
		width: 4px;
		height: 100px;
		background: #5f6b77;
	}
`
const Viewport = styled.div`
	position: relative;
	flex: 1;
	min-width: 0;
	background: #444;
	overflow: hidden;
`
const Scene = styled.svg`
	position: absolute;
	inset: 0;
	width: 100%;
	height: 100%;
`
const ViewTools = styled.div`
	position: absolute;
	top: 0;
	right: 0;
	display: flex;
	flex-direction: column;
	align-items: center;
	width: 33px;
	padding: 9px 1px 5px 0;
	border: 1px solid #b9bbc0;
	border-radius: 2px;
	background: #97999f;

	& button {
		display: flex;
		margin-bottom: 5px;
	}
	& ${Caret} {
		margin: 1px 0 6px;
		border-top-color: #333c4c;
	}
	& hr {
		width: 23px;
		margin: 0 0 4px;
		border: 0;
		border-top: 1px solid #6c6f76;
	}
`
const Gauge = styled.div`
	position: absolute;
	top: 82px;
	right: 79px;
	display: flex;
	width: 66px;
	height: 66px;
	border-radius: 50%;
	background: conic-gradient(#5be36f, #1fd45f 62%, #8a8a8a 62%);
	box-shadow: 0 0 4px rgba(0, 0, 0, 0.3);
	padding: 4px;
`
const GaugeFace = styled.div`
	display: flex;
	flex: 1;
	flex-direction: column;
	align-items: center;
	padding-top: 8px;
	border: 1px solid #27c95f;
	border-radius: 50%;
	background: radial-gradient(#f2f2f2 55%, #c8f0cc);
	color: #333;
	font: 12px/16px Roboto, sans-serif;

	& strong {
		font-size: 24px;
		font-weight: 300;
		line-height: 26px;
	}
	& small {
		font-size: 12px;
	}
	& span {
		display: flex;
		align-items: center;
		gap: 1px;
		color: #222;
		font: 10px/14px 'Open Sans', sans-serif;
	}
`

const Model = () => (
	<Scene viewBox='498 166 1422 844' preserveAspectRatio='xMinYMin slice' aria-hidden='true'>
		<path d='M631 616L1758 166h65L1601 268 631 655z' fill='#4f4f4f' />
		<path d='M498 543l133 73v87L498 629z' fill='#494949' />
		<path d='M498 755l133-53v11L498 773z' fill='#4f4f4f' />
		<path d='M631 655L1601 268l10 6L642 661z' fill='#174829' />
		<path d='M642 661L1611 274 642 718z' fill='#1a5932' />
		<path d='M631 655l11 6v57l-11-6z' fill='#17502c' />
		<path d='M1478 1010L1920 807' stroke='#fff' strokeWidth='1.600' />
		<g fill='none' stroke='#a8a8a8'>
			<circle cx='1209' cy='588.500' r='406.500' />
			<circle cx='1209' cy='182' r='30' />
			<circle cx='1209' cy='995' r='30' />
			<circle cx='802.500' cy='588' r='30' />
			<circle cx='1615.500' cy='588' r='30' />
		</g>
		<path d='M546 958l-11-5' stroke='#0f0' strokeWidth='4' />
		<ellipse cx='536' cy='954' rx='4' ry='5' fill='#0f0' />
		<path d='M529 950l7-1-2 7z' fill='#0a7a0a' />
		<path d='M552 958l12-5' stroke='#f00' strokeWidth='4' />
		<path d='M558 949l12 2-7 9z' fill='#f00' />
		<path d='M564 950l6 1-4 5z' fill='#a00' />
		<path d='M546 957v-13h-3l5-10 5 10h-3v13z' fill='#00f' />
		<path d='M543 957l5-1 5 1v6l-5 3-5-3z' fill='#bbb' />
		<path d='M543 957l5 2v7l-5-3z' fill='#999' />
		<g fontFamily='Liberation Sans, sans-serif' fontSize='15' textAnchor='middle'>
			<text x='548' y='933' fill='#33f'>Z</text>
			<text x='525' y='952' fill='#0f0'>Y</text>
			<text x='575.500' y='955' fill='#f22'>X</text>
		</g>
	</Scene>
)

const ink = '#2f3b4f'
const viewArt = {
	orbit: (
		<>
			<circle cx='12' cy='12' r='9.500' fill='#8fa3bd' stroke={ink} />
			<circle cx='9' cy='8' r='5' fill='#dfe8f2' opacity='.8' />
			<path d='M1 18C6 18 16 12 20 7' stroke={ink} strokeWidth='1.500' fill='none' />
			<circle cx='19' cy='7' r='4' fill='#c9d6e4' stroke={ink} />
			<circle cx='2.500' cy='17' r='2' fill='#8fa3bd' stroke={ink} />
		</>
	),
	plan: (
		<>
			<rect x='.5' y='1.500' width='23' height='22' fill='#8799b3' stroke={ink} />
			<text x='11' y='21' fontSize='9' fill={ink}>2D</text>
		</>
	),
	wire: (
		<>
			<path d='M1 6l4-5h18v17l-5 5H1z' fill='#cfe5ff' stroke={ink} />
			<path d='M1 6l4-5h18l-5 5z' fill='#7f93ab' stroke={ink} />
			<path d='M18 6v17M5 6v12h13M5 18l-4 5M18 18h5' stroke={ink} fill='none' />
		</>
	),
	solid: (
		<>
			<path d='M1 6l4-5h18v17l-5 5H1z' fill='#8799b3' stroke={ink} />
			<path d='M1 6h17v17M18 6l5-5' stroke={ink} fill='none' />
		</>
	),
	spin: (
		<>
			<path d='M20 7A10 10 0 1 0 21 17' stroke={ink} strokeWidth='2' fill='none' />
			<path d='M22 2v7h-7z' fill={ink} />
		</>
	),
	layers: (
		<>
			<path d='M.5 4.500l2-3h19l2 3v19H.5z' fill='#8799b3' stroke={ink} />
			<path d='M1 4.500h22M12 10v11M4 6.500l1.500 1.500L8 6M15 6.500l1.500 1.500L19 6M7 11.500h3M7 15.500h3M7 19.500h3M18 11.500h3M18 15.500h3M18 19.500h3' stroke={ink} fill='none' />
			<path d='M3.500 10.500h2v2h-2zM3.500 14.500h2v2h-2zM3.500 18.500h2v2h-2zM14.500 10.500h2v2h-2zM14.500 14.500h2v2h-2zM14.500 18.500h2v2h-2z' stroke={ink} fill='none' />
		</>
	),
}
const ViewButtonArt = ({ name }) => (
	<button aria-label={name}>
		<svg width='24' height='24' viewBox='0 0 24 24' aria-hidden='true'>{viewArt[name]}</svg>
	</button>
)

const View = () => (
	<Viewport>
		<Model />
		<Gauge>
			<GaugeFace>
				<div><strong>62</strong><small>%</small></div>
				<span>
					<svg width='5' height='8' viewBox='0 0 5 8' aria-hidden='true'><path d='M2.500 0v7M.5 4.500l2 2.500 2-2.500' stroke='#12a83d' strokeWidth='1.300' fill='none' /></svg>
					0.03K/s
				</span>
			</GaugeFace>
		</Gauge>
		<ViewTools>
			<ViewButtonArt name='orbit' />
			<ViewButtonArt name='plan' />
			<ViewButtonArt name='wire' />
			<Caret />
			<ViewButtonArt name='solid' />
			<Caret />
			<ViewButtonArt name='spin' />
			<Caret />
			<hr />
			<ViewButtonArt name='layers' />
		</ViewTools>
	</Viewport>
)

/* ---------- status bar ---------- */

const StatusBar = styled.footer`
	display: flex;
	align-items: center;
	gap: 4px;
	height: 29px;
	padding: 2px 36px 0 2px;
	background: #dddde0;
	color: #333;
	white-space: nowrap;
`
const Readout = styled.span`
	width: ${({ $width }) => $width}px;
	flex: none;
	font-size: ${({ $large }) => ($large ? 13 : 12)}px;
`
const Hint = styled.span`
	flex: 1;
	padding-left: 1px;
`
const StatusButton = styled.button`
	display: flex;
	align-items: center;
	justify-content: center;
	gap: 4px;
	height: 25px;
	padding: 0 ${({ $text }) => ($text ? 5 : 4)}px;
	border: 1px solid ${({ $active }) => ($active ? '#3593ea' : '#9d9d9f')};
	background: ${({ $active }) => ($active ? '#fff' : '#cfcfd1')};
`

const Status = () => (
	<StatusBar>
		<Readout $width={259} $large>X = 193204 Y = -11347 Z = 248671</Readout>
		<Readout $width={79}>层高： 0.35</Readout>
		<Readout $width={129}>标高： -8.91~-8.56</Readout>
		<Readout $width={99}>0</Readout>
		<Readout $width={98}>隐藏：0</Readout>
		<StatusButton aria-label='正交'><Icon name='ortho' /></StatusButton>
		<StatusButton aria-label='矩形' $active><Icon name='snapRect' /><Caret /></StatusButton>
		<StatusButton aria-label='交点'><Icon name='cross' /></StatusButton>
		<StatusButton aria-label='角度'><Icon name='angle' /><Caret /></StatusButton>
		<StatusButton aria-label='点输入'><Icon name='pointInput' /><Caret /></StatusButton>
		<StatusButton $text>跨图层选择</StatusButton>
		<StatusButton $text>折线选择</StatusButton>
		<Hint>按鼠标左键指定第一个角点，或拾取构件图元</Hint>
		<span>200 FPS</span>
	</StatusBar>
)

const Taskbar = styled.div`
	display: flex;
	height: 9px;
	border-top: 2px solid #16324f;
	background: linear-gradient(90deg, #1d6396, #4c93ad 22%, #3e9bd0 40%, #2273b8 55%, #2470b8 75%, #1b4c80 90%, #173a63);
	overflow: hidden;
`
const StartArea = styled.div`
	width: 114px;
	background: radial-gradient(ellipse at 27px 10px, #a9bccb 12px, transparent 15px),
		radial-gradient(ellipse at 88px 10px, #bfe2f2 5px, transparent 9px);
`
const TaskInput = styled.div`
	width: 164px;
	background: #f0f0f0;
`
const TaskBlue = styled.div`
	width: 56px;
	margin-right: 18px;
	background: #2089ff;
`
const TaskOrb = styled.div`
	width: 22px;
	height: 22px;
	border-radius: 50%;
	margin-right: 42px;
	background: #35a8e8;
	box-shadow: 14px -4px 0 -6px #f0b62a;
`
const TaskWindow = styled.div`
	width: 58px;
	margin-right: 4px;
	border: 1px solid #cfe6f3;
	border-bottom: 0;
	border-radius: 2px 2px 0 0;
	background: radial-gradient(ellipse 16px 6px at 50% 8px, ${({ $tint }) => $tint} 80%, transparent),
		linear-gradient(90deg, #d3e9f3, #6fb0d8);
`
const ShowDesktop = styled.div`
	width: 14px;
	margin-left: auto;
	border: 1px solid #7c95ae;
	background: #4e6f90;
`

const Page = styled.div`
	display: flex;
	flex-direction: column;
	min-width: 1280px;
	height: 100vh;
	overflow: hidden;
`

const App = () => (
	<>
		<GlobalStyle />
		<Page>
			<TitleBar />
			<Ribbon />
			<PickerBar>
				{pickers.map(([label, value]) => (
					<Picker key={label}>
						<select aria-label={label} defaultValue={value}><option>{value}</option></select>
						<Caret />
					</Picker>
				))}
			</PickerBar>
			<Main>
				<NavPanel />
				<MiddleColumn>
					<PartsPanel />
					<PropsPanel />
				</MiddleColumn>
				<Splitter>
					<button aria-label='收起'>
						<svg width='4' height='6' viewBox='0 0 4 6' aria-hidden='true'><path d='M4 0v6L0 3z' fill='#cdd2d6' /></svg>
					</button>
				</Splitter>
				<View />
			</Main>
			<Status />
			<Taskbar>
				<StartArea />
				<TaskInput />
				<TaskBlue />
				<TaskOrb />
				{['#e9c98a', '#6aa8f4', '#2a6ac0', '#7cc77a', '#bfe0ef'].map((tint) => <TaskWindow key={tint} $tint={tint} />)}
				<ShowDesktop />
			</Taskbar>
		</Page>
	</>
)

export default App
